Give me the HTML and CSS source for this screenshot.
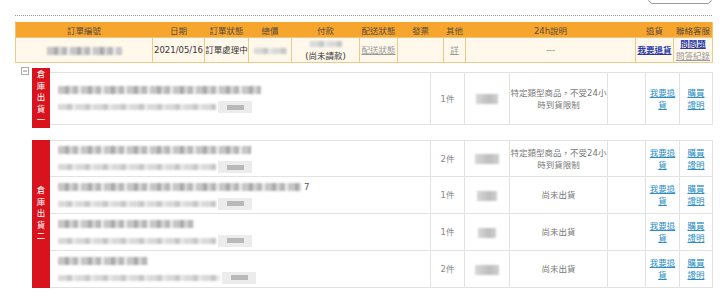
FILE: index.html
```html
<!DOCTYPE html>
<html lang="zh-Hant">
<head>
    <meta charset="UTF-8">
    <title>訂單明細</title>
    <link rel="stylesheet" href="styles.css">
</head>
<body>
    <div class="page">
        <div class="top">
            <button class="top-btn" type="button"></button>
        </div>

        <table class="order">
            <colgroup>
                <col style="width:137px"><col style="width:52px"><col style="width:44px"><col style="width:43px">
                <col style="width:68px"><col style="width:38px"><col style="width:46px"><col style="width:22px">
                <col style="width:170px"><col style="width:38px"><col style="width:39px">
            </colgroup>
            <tr>
                <th>訂單編號</th><th>日期</th><th>訂單狀態</th><th>總價</th><th>付款</th><th>配送狀態</th>
                <th>發票</th><th>其他</th><th>24h說明</th><th>退貨</th><th>聯絡客服</th>
            </tr>
            <tr>
                <td><span class="mask dark" style="width:75px"></span></td>
                <td>2021/05/16</td>
                <td>訂單處理中</td>
                <td><span class="mask soft" style="width:33px"></span></td>
                <td><span class="mask soft pay" style="width:32px"></span><br>(尚未請款)</td>
                <td><a href="#" class="link-gray">配送狀態</a></td>
                <td></td>
                <td><a href="#" class="link-gray">詳</a></td>
                <td class="muted">---</td>
                <td><a href="#" class="link-strong">我要退貨</a></td>
                <td><a href="#" class="link-strong">問問題</a><br><a href="#" class="link-gray">問答紀錄</a></td>
            </tr>
        </table>
    </div>

    <!-- 倉庫出貨一 -->
    <div class="group first">
        <div class="side">
            <svg class="toggle" width="8" height="8" viewBox="0 0 8 8">
                <rect x="0.5" y="0.5" width="7" height="7" fill="#fff" stroke="#aaa"/>
                <line x1="2" y1="4" x2="6" y2="4" stroke="#888"/>
            </svg>
            <div class="tag">倉<br>庫<br>出<br>貨<br>一</div>
        </div>
        <table class="items">
            <colgroup>
                <col style="width:380px"><col style="width:34px"><col style="width:45px"><col style="width:98px">
                <col style="width:38px"><col style="width:34px"><col style="width:33px">
            </colgroup>
            <tr class="tall">
                <td class="prod">
                    <div class="pline"><span class="mask dark" style="width:203px"></span></div>
                    <div class="pline"><span class="mask soft" style="width:158px"></span><span class="chip"></span></div>
                </td>
                <td>1件</td>
                <td><span class="mask price" style="width:22px"></span></td>
                <td class="note">特定類型商品，不受24小時到貨限制</td>
                <td></td>
                <td><a href="#" class="link">我要退貨</a></td>
                <td><a href="#" class="link">購買<br>證明</a></td>
            </tr>
        </table>
    </div>

    <!-- 倉庫出貨二 -->
    <div class="group">
        <div class="side">
            <span class="toggle"></span>
            <div class="tag">倉<br>庫<br>出<br>貨<br>二</div>
        </div>
        <table class="items">
            <colgroup>
                <col style="width:380px"><col style="width:34px"><col style="width:45px"><col style="width:98px">
                <col style="width:38px"><col style="width:34px"><col style="width:33px">
            </colgroup>
            <tr>
                <td class="prod">
                    <div class="pline"><span class="mask dark" style="width:193px"></span></div>
                    <div class="pline"><span class="mask soft" style="width:158px"></span><span class="chip"></span></div>
                </td>
                <td>2件</td>
                <td><span class="mask price" style="width:24px"></span></td>
                <td class="note">特定類型商品，不受24小時到貨限制</td>
                <td></td>
                <td><a href="#" class="link">我要退貨</a></td>
                <td><a href="#" class="link">購買<br>證明</a></td>
            </tr>
            <tr class="r37">
                <td class="prod">
                    <div class="pline"><span class="mask dark" style="width:243px"></span><span class="tail">7</span></div>
                    <div class="pline"><span class="mask soft" style="width:158px"></span><span class="chip"></span></div>
                </td>
                <td>1件</td>
                <td><span class="mask price" style="width:20px"></span></td>
                <td class="note">尚未出貨</td>
                <td></td>
                <td><a href="#" class="link">我要退貨</a></td>
                <td><a href="#" class="link">購買<br>證明</a></td>
            </tr>
            <tr class="r37">
                <td class="prod">
                    <div class="pline"><span class="mask dark" style="width:136px"></span></div>
                    <div class="pline"><span class="mask soft" style="width:158px"></span><span class="chip"></span></div>
                </td>
                <td>1件</td>
                <td><span class="mask price" style="width:18px"></span></td>
                <td class="note">尚未出貨</td>
                <td></td>
                <td><a href="#" class="link">我要退貨</a></td>
                <td><a href="#" class="link">購買<br>證明</a></td>
            </tr>
            <tr class="r37">
                <td class="prod">
                    <div class="pline"><span class="mask dark" style="width:90px"></span></div>
                    <div class="pline"><span class="mask soft" style="width:162px"></span><span class="chip"></span></div>
                </td>
                <td>2件</td>
                <td><span class="mask price" style="width:24px"></span></td>
                <td class="note">尚未出貨</td>
                <td></td>
                <td><a href="#" class="link">我要退貨</a></td>
                <td><a href="#" class="link">購買<br>證明</a></td>
            </tr>
        </table>
    </div>
</body>
</html>
```

FILE: styles.css
```css
body {
    margin: 0;
    font-family: "DejaVu Sans", "Noto Sans CJK TC", sans-serif;
    font-size: 8.5px;
    color: #333;
    background: #fff;
}

.page {
    width: 697px;
    padding: 0 8px 0 15px;
}

.top {
    height: 15px;
    border-bottom: 1px dotted #999;
    display: flex;
    justify-content: flex-end;
    align-items: flex-start;
}

.top-btn {
    box-sizing: border-box;
    width: 64px;
    height: 20px;
    margin-top: -16px;
    border: 1px solid #999;
    border-radius: 5px;
    background: #fff;
}

/* order summary */
.order {
    margin-top: 6px;
    width: 697px;
    border-collapse: collapse;
    table-layout: fixed;
}

.order th {
    height: 14px;
    padding: 0;
    background: #f6a52d;
    border: 1px solid #f0c47f;
    border-top-color: #f6a52d;
    border-left-color: #f6a52d;
    border-right-color: #f6a52d;
    color: #5a4a3c;
    font-weight: normal;
    text-align: center;
}

.order th:first-child {
    border-left-color: #f0c47f;
}

.order th:last-child {
    border-right-color: #f0c47f;
}

.order td {
    height: 24px;
    padding: 0;
    background: #fff8eb;
    border: 1px solid #ecca8c;
    text-align: center;
    line-height: 12px;
}

.muted {
    color: #888;
}

.link-gray {
    color: #999;
    text-decoration: underline;
}

.link-strong {
    color: #2b3aa8;
    font-weight: bold;
    text-decoration: underline;
}

/* blurred placeholders */
.mask {
    display: inline-block;
    vertical-align: middle;
    filter: blur(0.8px);
}

.mask.dark {
    height: 8px;
    background: repeating-linear-gradient(90deg, #c6c6c6 0 7px, #a8a8a8 7px 11px, #d3d3d3 11px 15px, #b6b6b6 15px 20px, #ececec 20px 23px);
}

.mask.soft {
    height: 6px;
    background: repeating-linear-gradient(90deg, #d9d9d9 0 9px, #c6c6c6 9px 14px, #e7e7e7 14px 18px);
}

.mask.pay {
    margin-bottom: 2px;
}

.mask.price {
    height: 10px;
    background: linear-gradient(90deg, #d8d8d8, #bdbdbd 60%, #cfcfcf);
}

.chip {
    display: inline-block;
    vertical-align: middle;
    width: 34px;
    height: 12px;
    margin-left: 2px;
    background: linear-gradient(90deg, transparent 9px, #b8b8b8 9px 26px, transparent 26px) center / 100% 5px no-repeat, #ececec;
    filter: blur(0.6px);
}

/* shipping groups */
.group {
    display: flex;
    align-items: flex-start;
    margin-top: 12px;
}

.group.first {
    margin-top: 4px;
}

.side {
    width: 50px;
    flex: none;
    display: flex;
    align-items: flex-start;
    gap: 3px;
    padding-left: 21px;
    box-sizing: border-box;
    align-self: stretch;
}

.toggle {
    width: 8px;
    height: 8px;
    flex: none;
}

.tag {
    width: 18px;
    min-height: 60px;
    margin-top: 1px;
    padding: 1px 0;
    box-sizing: border-box;
    background: #d8131d;
    color: #fff;
    font-size: 8.5px;
    line-height: 11.5px;
    text-align: center;
    display: flex;
    flex-direction: column;
    justify-content: center;
}

.group:not(.first) .tag {
    margin-top: 0;
    align-self: stretch;
}

.group.first .items {
    margin-top: 5px;
}

.items {
    width: 662px;
    border-collapse: collapse;
    table-layout: fixed;
    color: #888;
}

.items td {
    height: 35px;
    padding: 0 2px;
    border: 1px solid #e2e2e2;
    text-align: center;
    vertical-align: middle;
    line-height: 12px;
}

.items tr.tall td {
    height: 51px;
}

.items tr.r37 td {
    height: 36px;
}

.items td.prod {
    padding: 0 0 0 7px;
    text-align: left;
    border-left-color: #fff;
}

.items td.note {
    padding: 0;
    color: #777;
}

.pline {
    height: 17px;
    display: flex;
    align-items: center;
}

.tail {
    margin-left: 3px;
    color: #555;
}

.link {
    color: #2a8dc5;
    text-decoration: underline;
}
```
